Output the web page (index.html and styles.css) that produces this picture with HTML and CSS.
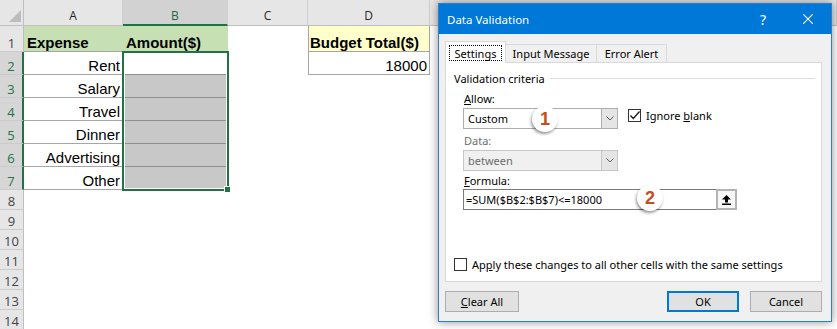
FILE: index.html
```
<!DOCTYPE html>
<html>
<head>
<meta charset="utf-8">
<meta name="viewport" content="width=device-width, initial-scale=1">
<link rel="stylesheet" href="styles.css">
</head>
<body>
<div class="screen">

<div class="sheet">
  <div class="corner"><span class="tri"></span></div>
  <div class="ch">A</div>
  <div class="ch on">B</div>
  <div class="ch">C</div>
  <div class="ch">D</div>
  <div class="ch"></div>

  <div class="rh">1</div>
  <div class="c green b">Expense</div>
  <div class="c green b">Amount($)</div>
  <div class="c"></div>
  <div class="c yellow b dbox">Budget Total($)</div>
  <div class="c"></div>

  <div class="rh on">2</div>
  <div class="c a">Rent</div>
  <div class="c bw"></div>
  <div class="c"></div>
  <div class="c dbox num">18000</div>
  <div class="c"></div>

  <div class="rh on">3</div>
  <div class="c a">Salary</div>
  <div class="c bg"></div>
  <div class="c wide"></div>

  <div class="rh on">4</div>
  <div class="c a">Travel</div>
  <div class="c bg"></div>
  <div class="c wide"></div>

  <div class="rh on">5</div>
  <div class="c a">Dinner</div>
  <div class="c bg"></div>
  <div class="c wide"></div>

  <div class="rh on">6</div>
  <div class="c a">Advertising</div>
  <div class="c bg"></div>
  <div class="c wide"></div>

  <div class="rh on">7</div>
  <div class="c a">Other</div>
  <div class="c bg last"></div>
  <div class="c wide"></div>

  <div class="rh">8</div><div class="c rest"></div>
  <div class="rh">9</div><div class="c rest"></div>
  <div class="rh">10</div><div class="c rest"></div>
  <div class="rh">11</div><div class="c rest"></div>
  <div class="rh">12</div><div class="c rest"></div>
  <div class="rh">13</div><div class="c rest"></div>
  <div class="rh">14</div><div class="c rest"></div>
</div>

<div class="selection"><span class="handle"></span></div>

<div class="dialog">
  <div class="titlebar">
    <span class="title">Data Validation</span>
    <span class="help">?</span>
    <span class="close">
      <svg width="10" height="10" viewBox="0 0 10 10"><path d="M0 0L10 10M10 0L0 10" stroke="#fff" stroke-width="1.1"/></svg>
    </span>
  </div>

  <div class="dlg-body">
    <div class="tabs">
      <div class="tab active"><span class="focus">Settings</span></div>
      <div class="tab input">Input Message</div>
      <div class="tab error">Error Alert</div>
    </div>

    <div class="panel">
      <div class="group"><span>Validation criteria</span><span class="rule"></span></div>

      <div class="fields">
        <div class="label"><u>A</u>llow:</div>
        <div class="row">
          <div class="combo">
            <span class="val">Custom</span>
            <span class="arrow"><svg width="8" height="5" viewBox="0 0 8 5"><path d="M0.5 0.5L4 4L7.5 0.5" fill="none" stroke="#555"/></svg></span>
          </div>
          <div class="check">
            <span class="box"><svg width="11" height="11" viewBox="0 0 11 11"><path d="M1.5 5.5L4.3 8.5L10.5 1.5" fill="none" stroke="#111" stroke-width="1.2"/></svg></span>
            <span>Ignore <u>b</u>lank</span>
          </div>
        </div>

        <div class="label off data">Data:</div>
        <div class="combo off">
          <span class="val">between</span>
          <span class="arrow"><svg width="8" height="5" viewBox="0 0 8 5"><path d="M0.5 0.5L4 4L7.5 0.5" fill="none" stroke="#666"/></svg></span>
        </div>

        <div class="label formula-label"><u>F</u>ormula:</div>
        <div class="formula">
          <span class="val">=SUM($B$2:$B$7)&lt;=18000</span>
          <span class="pick"><svg width="9" height="10" viewBox="0 0 9 10"><path d="M4.5 0L9 4.5H6V7.5H3V4.5H0Z" fill="#000"/><rect x="0" y="8.5" width="9" height="1.5" fill="#000"/></svg></span>
        </div>
      </div>

      <div class="check apply">
        <span class="box"></span>
        <span>Ap<u>p</u>ly these changes to all other cells with the same settings</span>
      </div>

      <span class="badge one">1</span>
      <span class="badge two">2</span>
    </div>

    <div class="btns">
      <button class="btn clear"><u>C</u>lear All</button>
      <button class="btn ok">OK</button>
      <button class="btn cancel">Cancel</button>
    </div>
  </div>
</div>

</div>
</body>
</html>
```

FILE: styles.css
```
body {
  margin: 0;
  background: #ffffff;
  font-family: "Liberation Sans", Arial, sans-serif;
  overflow: hidden;
}

.screen {
  position: relative;
  width: 837px;
  height: 329px;
  overflow: hidden;
}

/* Spreadsheet grid */
.sheet {
  display: grid;
  grid-template-columns: 24px 99px 105px 80px 122px 1fr;
  grid-template-rows: 26px 26px repeat(6, 23px) repeat(8, 20px);
}

.sheet > div {
  box-sizing: border-box;
}

.corner {
  background: #e6e6e6;
  border-right: 1px solid #bfbfbf;
  border-bottom: 1px solid #bfbfbf;
}

.corner .tri {
  display: block;
  width: 0;
  height: 0;
  border-left: 12px solid transparent;
  border-bottom: 12px solid #bcbcbc;
  margin: 10px 0 0 9px;
}

/* column headers */
.ch {
  background: #e6e6e6;
  border-right: 1px solid #d0d0d0;
  border-bottom: 1px solid #bfbfbf;
  font-family: "Open Sans", sans-serif;
  font-size: 12px;
  line-height: 15px;
  color: #262626;
  display: flex;
  align-items: flex-end;
  justify-content: center;
  padding-bottom: 2px;
}

.ch.on {
  background: #d2d2d2;
  color: #1e6b40;
  border-bottom: 2px solid #217346;
  padding-bottom: 1px;
}

/* row headers */
.rh {
  background: #e6e6e6;
  border-right: 1px solid #bfbfbf;
  border-bottom: 1px solid #cbcbcb;
  font-family: "Open Sans", sans-serif;
  font-size: 13px;
  line-height: 16px;
  color: #444;
  display: flex;
  align-items: flex-end;
  justify-content: center;
}

.rh.on {
  background: #d6d6d6;
  color: #217346;
  border-right: 2px solid #217346;
}

/* cells */
.c {
  display: flex;
  align-items: flex-end;
  padding: 0 3px;
  font-size: 15px;
  line-height: 16px;
  white-space: nowrap;
  color: #000;
}

.c.b {
  font-weight: bold;
}

.c.green {
  background: #c6e0b4;
  border-bottom: 1px solid #a6a6a6;
}

.c.yellow {
  background: #ffffcc;
}

.c.a {
  justify-content: flex-end;
  border-bottom: 1px solid #a6a6a6;
}

.c.bw {
  border-bottom: 1px solid #8f8f8f;
}

.c.bg {
  background: #c8c8c8;
  border-bottom: 1px solid #8f8f8f;
}

.c.bg.last {
  border-bottom: none;
}

.c.dbox {
  border-left: 1px solid #a6a6a6;
  border-right: 1px solid #a6a6a6;
  border-bottom: 1px solid #a6a6a6;
  padding-left: 1px;
}

.c.num {
  justify-content: flex-end;
  padding-right: 2px;
}

.c.wide {
  grid-column: span 3;
}

.c.rest {
  grid-column: span 5;
}

/* active selection B2:B7 */
.selection {
  position: absolute;
  left: 122px;
  top: 51px;
  width: 107px;
  height: 140px;
  box-sizing: border-box;
  border: 2px solid #217346;
  box-shadow: inset 0 0 0 1px #ffffff;
}

.selection .handle {
  position: absolute;
  right: -4px;
  bottom: -4px;
  width: 7px;
  height: 7px;
  box-sizing: border-box;
  background: #217346;
  border: 1px solid #ffffff;
}

/* Data Validation dialog */
.dialog {
  position: absolute;
  left: 438px;
  top: 3px;
  width: 394px;
  height: 319px;
  box-sizing: border-box;
  border: 1px solid #2a7fd4;
  background: #f0f0f0;
  box-shadow: 0 0 9px rgba(0, 0, 0, 0.45);
  display: flex;
  flex-direction: column;
  font-family: "Noto Sans", "DejaVu Sans", sans-serif;
  font-size: 11px;
  line-height: 15px;
  color: #000;
}

.titlebar {
  flex: none;
  height: 30px;
  background: #0078d7;
  color: #ffffff;
  display: flex;
  align-items: center;
  padding-left: 8px;
  font-size: 11.5px;
}

.titlebar .title {
  flex: 1;
}

.titlebar .help {
  width: 36px;
  margin-right: 4px;
  text-align: center;
  font-size: 14px;
}

.titlebar .close {
  width: 46px;
  display: flex;
  justify-content: center;
}

.dlg-body {
  flex: 1;
  display: flex;
  flex-direction: column;
  padding: 7px 9px 9px 6px;
}

/* tabs */
.tabs {
  display: flex;
  align-items: flex-end;
  height: 22px;
  margin-bottom: -1px;
  position: relative;
  z-index: 1;
}

.tab {
  height: 18px;
  margin-bottom: 1px;
  box-sizing: border-box;
  border: 1px solid #d9d9d9;
  border-bottom: none;
  background: #f0f0f0;
  display: flex;
  align-items: center;
  justify-content: center;
}

.tab.active {
  width: 61px;
  height: 22px;
  margin-bottom: 0;
  background: #ffffff;
  padding: 3px 3px 2px;
  position: relative;
  z-index: 2;
}

.tab.input {
  width: 92px;
  margin-left: -1px;
}

.tab.error {
  width: 71px;
  margin-left: -1px;
}

.tab .focus {
  flex: 1;
  align-self: stretch;
  border: 1px dotted #000;
  display: flex;
  align-items: center;
  justify-content: center;
}

/* settings panel */
.panel {
  flex: none;
  height: 220px;
  box-sizing: border-box;
  background: #ffffff;
  border: 1px solid #d9d9d9;
  padding: 8px 6px 0 8px;
  position: relative;
}

.group {
  display: flex;
  align-items: center;
  height: 15px;
}

.group .rule {
  flex: 1;
  height: 1px;
  background: #dcdcdc;
  margin-left: 5px;
}

.fields {
  margin-left: 9px;
}

.label {
  margin-top: 5px;
  padding-left: 1px;
}

.label.off {
  color: #6d6d6d;
}

.label.data {
  margin-top: 4px;
}

.label.formula-label {
  margin-top: 2px;
}

.row {
  display: flex;
  align-items: flex-start;
  margin-top: 2px;
}

.combo {
  width: 155px;
  height: 21px;
  box-sizing: border-box;
  border: 1px solid #adadad;
  background: #ffffff;
  display: flex;
}

.combo.off {
  margin-top: 2px;
  background: #f0f0f0;
  border-color: #c6c6c6;
  color: #6d6d6d;
}

.combo .val {
  flex: 1;
  padding-left: 4px;
  line-height: 19px;
}

.combo .arrow {
  width: 15px;
  border-left: 1px solid #adadad;
  background: #e5e5e5;
  display: flex;
  align-items: center;
  justify-content: center;
}

.combo.off .arrow {
  border-left-color: #c6c6c6;
}

.check {
  display: flex;
  align-items: flex-start;
  gap: 5px;
  margin-left: 10px;
}

.check .box {
  flex: none;
  width: 13px;
  height: 13px;
  margin-top: 1px;
  box-sizing: border-box;
  border: 1px solid #333;
  background: #ffffff;
  display: flex;
  align-items: center;
  justify-content: center;
}

.check.apply {
  margin: 47px 0 0 0;
}

.formula {
  margin-top: 1px;
  width: 274px;
  height: 21px;
  box-sizing: border-box;
  border: 1px solid #7a7a7a;
  display: flex;
}

.formula .val {
  flex: 1;
  padding-left: 2px;
  line-height: 19px;
}

.formula .pick {
  width: 21px;
  margin: -1px -1px -1px 0;
  box-sizing: border-box;
  border: 2px solid #b4b4b4;
  background: #f7f7f7;
  display: flex;
  align-items: center;
  justify-content: center;
}

/* numbered callouts */
.badge {
  position: absolute;
  width: 26px;
  height: 26px;
  border-radius: 50%;
  background: #ffffff;
  box-shadow: -1px 2px 3px rgba(0, 0, 0, 0.4);
  color: #c0501f;
  font: bold 18px/26px "Liberation Sans", Arial, sans-serif;
  text-align: center;
}

.badge.one {
  left: 86px;
  top: 43px;
}

.badge.two {
  left: 191px;
  top: 122px;
}

/* buttons */
.btns {
  display: flex;
  margin-top: 9px;
}

.btn {
  width: 72px;
  height: 21px;
  box-sizing: border-box;
  border: 1px solid #adadad;
  background: #e1e1e1;
  font: inherit;
  color: #000;
  padding: 0;
}

.btn.clear {
  width: 74px;
}

.btn.ok {
  margin-left: auto;
  border: 2px solid #0078d7;
}

.btn.cancel {
  margin-left: 11px;
}
```
